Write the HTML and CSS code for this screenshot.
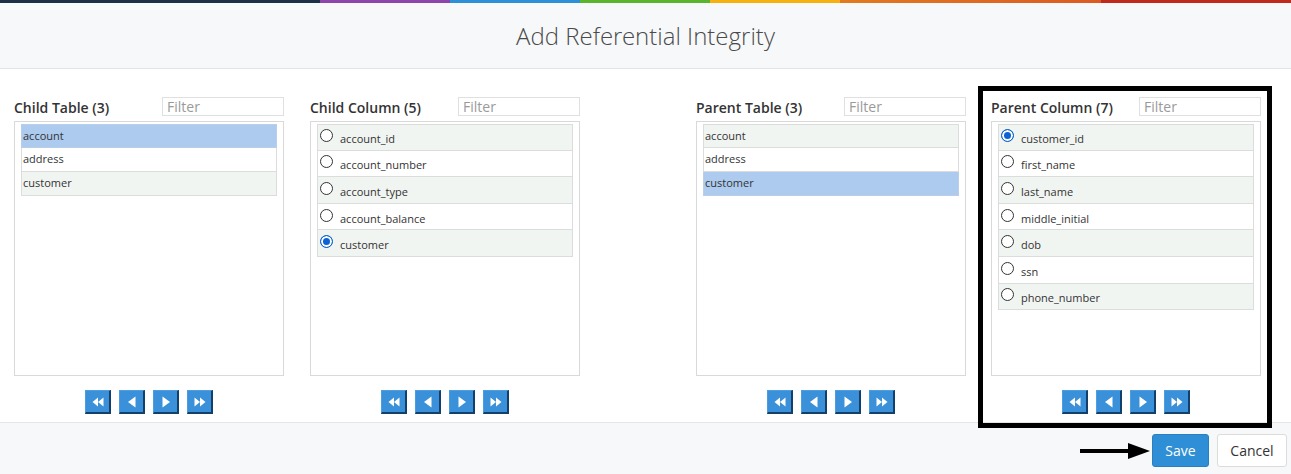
FILE: index.html
```html
<!DOCTYPE html>
<html lang="en">
<head>
    <meta charset="UTF-8">
    <title>Add Referential Integrity</title>
    <link rel="stylesheet" href="styles.css">
</head>
<body>
    <div class="color-bar">
        <span class="c1"></span><span class="c2"></span><span class="c3"></span><span class="c4"></span><span class="c5"></span><span class="c6"></span><span class="c7"></span>
    </div>

    <header class="modal-header">
        <h1>Add Referential Integrity</h1>
    </header>

    <main class="modal-body">
        <div class="panel">
            <div class="panel-head">
                <h2>Child Table (3)</h2>
                <input class="filter" type="text" placeholder="Filter">
            </div>
            <div class="list-box">
                <div class="row selected">account</div>
                <div class="row">address</div>
                <div class="row odd">customer</div>
            </div>
            <div class="pager">
                <button class="pg"><svg viewBox="0 0 12 12"><polygon points="6,1.5 0.5,6 6,10.5"/><polygon points="11.5,1.5 6,6 11.5,10.5"/></svg></button>
                <button class="pg"><svg viewBox="0 0 12 12"><polygon points="9.5,0.5 2,6 9.5,11.5"/></svg></button>
                <button class="pg"><svg viewBox="0 0 12 12"><polygon points="2.5,0.5 10,6 2.5,11.5"/></svg></button>
                <button class="pg"><svg viewBox="0 0 12 12"><polygon points="0.5,1.5 6,6 0.5,10.5"/><polygon points="6,1.5 11.5,6 6,10.5"/></svg></button>
            </div>
        </div>

        <div class="panel">
            <div class="panel-head">
                <h2>Child Column (5)</h2>
                <input class="filter" type="text" placeholder="Filter">
            </div>
            <div class="list-box">
                <div class="row radio odd"><span class="dot"></span>account_id</div>
                <div class="row radio"><span class="dot"></span>account_number</div>
                <div class="row radio odd"><span class="dot"></span>account_type</div>
                <div class="row radio"><span class="dot"></span>account_balance</div>
                <div class="row radio odd"><span class="dot on"></span>customer</div>
            </div>
            <div class="pager">
                <button class="pg"><svg viewBox="0 0 12 12"><polygon points="6,1.5 0.5,6 6,10.5"/><polygon points="11.5,1.5 6,6 11.5,10.5"/></svg></button>
                <button class="pg"><svg viewBox="0 0 12 12"><polygon points="9.5,0.5 2,6 9.5,11.5"/></svg></button>
                <button class="pg"><svg viewBox="0 0 12 12"><polygon points="2.5,0.5 10,6 2.5,11.5"/></svg></button>
                <button class="pg"><svg viewBox="0 0 12 12"><polygon points="0.5,1.5 6,6 0.5,10.5"/><polygon points="6,1.5 11.5,6 6,10.5"/></svg></button>
            </div>
        </div>

        <div class="panel parent">
            <div class="panel-head">
                <h2>Parent Table (3)</h2>
                <input class="filter" type="text" placeholder="Filter">
            </div>
            <div class="list-box">
                <div class="row odd">account</div>
                <div class="row">address</div>
                <div class="row selected">customer</div>
            </div>
            <div class="pager">
                <button class="pg"><svg viewBox="0 0 12 12"><polygon points="6,1.5 0.5,6 6,10.5"/><polygon points="11.5,1.5 6,6 11.5,10.5"/></svg></button>
                <button class="pg"><svg viewBox="0 0 12 12"><polygon points="9.5,0.5 2,6 9.5,11.5"/></svg></button>
                <button class="pg"><svg viewBox="0 0 12 12"><polygon points="2.5,0.5 10,6 2.5,11.5"/></svg></button>
                <button class="pg"><svg viewBox="0 0 12 12"><polygon points="0.5,1.5 6,6 0.5,10.5"/><polygon points="6,1.5 11.5,6 6,10.5"/></svg></button>
            </div>
        </div>

        <div class="panel highlighted">
            <div class="panel-head">
                <h2>Parent Column (7)</h2>
                <input class="filter" type="text" placeholder="Filter">
            </div>
            <div class="list-box">
                <div class="row radio odd"><span class="dot on"></span>customer_id</div>
                <div class="row radio"><span class="dot"></span>first_name</div>
                <div class="row radio odd"><span class="dot"></span>last_name</div>
                <div class="row radio"><span class="dot"></span>middle_initial</div>
                <div class="row radio odd"><span class="dot"></span>dob</div>
                <div class="row radio"><span class="dot"></span>ssn</div>
                <div class="row radio odd"><span class="dot"></span>phone_number</div>
            </div>
            <div class="pager">
                <button class="pg"><svg viewBox="0 0 12 12"><polygon points="6,1.5 0.5,6 6,10.5"/><polygon points="11.5,1.5 6,6 11.5,10.5"/></svg></button>
                <button class="pg"><svg viewBox="0 0 12 12"><polygon points="9.5,0.5 2,6 9.5,11.5"/></svg></button>
                <button class="pg"><svg viewBox="0 0 12 12"><polygon points="2.5,0.5 10,6 2.5,11.5"/></svg></button>
                <button class="pg"><svg viewBox="0 0 12 12"><polygon points="0.5,1.5 6,6 0.5,10.5"/><polygon points="6,1.5 11.5,6 6,10.5"/></svg></button>
            </div>
        </div>
    </main>

    <footer class="modal-footer">
        <svg class="arrow" viewBox="0 0 70 18"><rect x="0" y="7" width="52" height="4"/><polygon points="48,1 70,9 48,17"/></svg>
        <button class="btn btn-save">Save</button>
        <button class="btn btn-cancel">Cancel</button>
    </footer>
</body>
</html>
```

FILE: styles.css
```css
*, *::before, *::after {
    box-sizing: border-box;
}

body {
    margin: 0;
    width: 1291px;
    height: 474px;
    overflow: hidden;
    background: #fff;
    font-family: 'Open Sans', 'Liberation Sans', sans-serif;
    color: #333;
}

/* top stripe */
.color-bar {
    display: flex;
    height: 3px;
}

.color-bar span { display: block; height: 3px; }
.color-bar .c1 { width: 320px; background: #1d3045; }
.color-bar .c2 { width: 130px; background: #8e44ad; }
.color-bar .c3 { width: 130px; background: #2d8fd5; }
.color-bar .c4 { width: 130px; background: #5ab52e; }
.color-bar .c5 { width: 130px; background: #f6b10f; }
.color-bar .c6 { width: 261px; background: linear-gradient(90deg, #e27a1f, #dc5a22); }
.color-bar .c7 { flex: 1; background: #bf2a1c; }

.modal-header {
    height: 66px;
    background: #f7f8fa;
    border-bottom: 1px solid #e3e4e6;
    display: flex;
    align-items: center;
    justify-content: center;
}

.modal-header h1 {
    margin: 0;
    font-family: 'Open Sans Light', 'Open Sans', sans-serif;
    font-size: 24px;
    font-weight: 300;
    color: #4a4a4a;
    padding-bottom: 1px;
}

.modal-body {
    display: flex;
    height: 353px;
    padding: 28px 0 0 14px;
    gap: 26px;
    position: relative;
}

.panel {
    width: 270px;
}

.panel.parent {
    margin-left: 90px;
}

.panel.highlighted {
    margin-left: -1px;
}

/* annotation frame around parent column */
.panel.highlighted::before {
    content: '';
    position: absolute;
    left: 978px;
    top: 17px;
    width: 294px;
    height: 342px;
    border: 5px solid #000;
    z-index: 5;
}

.panel-head {
    display: flex;
    justify-content: space-between;
    align-items: center;
    height: 19px;
    margin-bottom: 5px;
}

.panel-head h2 {
    margin: 0;
    font-size: 14px;
    font-weight: 600;
    color: #333;
    padding-top: 1px;
}

.filter {
    width: 122px;
    height: 19px;
    border: 1px solid #e0e0e0;
    padding: 0 4px;
    font-family: inherit;
    font-size: 14px;
    color: #333;
    outline: none;
}

.filter::placeholder {
    color: #9a9a9a;
}

.list-box {
    height: 255px;
    border: 1px solid #d9d9d9;
    padding: 2px 6px 0 6px;
}

.row {
    height: 24px;
    line-height: 22px;
    border: 1px solid #dcdcdc;
    border-top: none;
    padding-left: 1px;
    font-size: 11px;
    color: #333;
    background: #fff;
}

.row:first-child {
    border-top: 1px solid #dcdcdc;
    height: 24px;
}

.row.odd {
    background: #f1f5f1;
}

.row.selected {
    background: #adcbee;
    border-color: #b9cfe8;
}

.row.radio {
    height: 26.6px;
    display: flex;
    align-items: center;
    padding: 4px 0 0 2px;
}

.dot {
    width: 13px;
    height: 13px;
    border: 1px solid #333;
    border-radius: 50%;
    background: #fff;
    margin: -7px 7px 0 0;
    flex: none;
}

.dot.on {
    border: 1px solid #0b5fcb;
    box-shadow: inset 0 0 0 2px #fff;
    background: #0b63d4;
}

.pager {
    display: flex;
    justify-content: center;
    gap: 8px;
    margin-top: 14px;
}

.pg {
    width: 26px;
    height: 24px;
    padding: 0 0 0 1px;
    background: #3a91d9;
    border: 1px solid #4b9fe0;
    border-right: 2px solid #13406a;
    border-bottom: 2px solid #13406a;
    display: flex;
    align-items: center;
    justify-content: center;
}

.pg svg {
    width: 12px;
    height: 12px;
    fill: #fff;
}

.modal-footer {
    height: 52px;
    background: #f7f8fa;
    border-top: 1px solid #e5e6e8;
    display: flex;
    justify-content: flex-end;
    align-items: flex-start;
    padding: 11px 4px 0 0;
    gap: 8px;
}

.arrow {
    width: 70px;
    height: 18px;
    margin: 8px -6px 0 0;
    fill: #000;
}

.btn {
    height: 33px;
    font-family: inherit;
    font-size: 14px;
    border-radius: 3px;
    padding: 0;
}

.btn-save {
    width: 57px;
    background: #2f8fd6;
    border: 1px solid #2a7fc0;
    color: #fff;
}

.btn-cancel {
    width: 70px;
    background: #fff;
    border: 1px solid #dcdcdc;
    color: #333;
}
```
